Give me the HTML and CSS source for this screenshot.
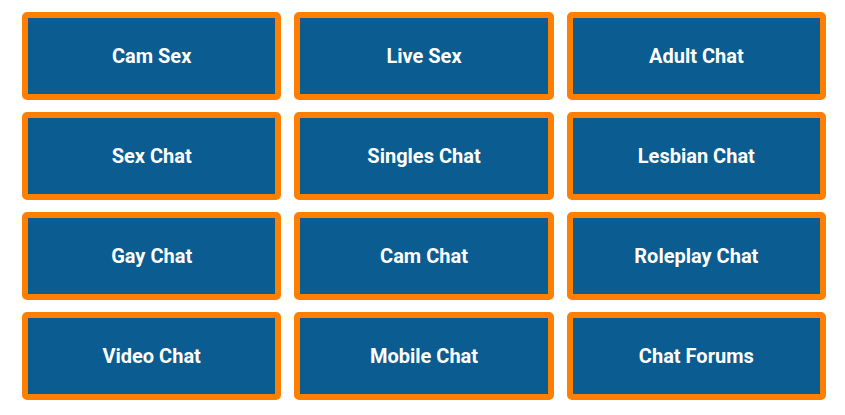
FILE: index.html
```html
<!DOCTYPE html>
<html lang="en">
<head>
    <meta charset="UTF-8">
    <meta name="viewport" content="width=device-width, initial-scale=1.0">
    <title>Chat Rooms</title>
    <link rel="stylesheet" href="styles.css">
</head>
<body>
    <div class="grid">
        <a class="tile" href="#">Cam Sex</a>
        <a class="tile" href="#">Live Sex</a>
        <a class="tile" href="#">Adult Chat</a>
        <a class="tile" href="#">Sex Chat</a>
        <a class="tile" href="#">Singles Chat</a>
        <a class="tile" href="#">Lesbian Chat</a>
        <a class="tile" href="#">Gay Chat</a>
        <a class="tile" href="#">Cam Chat</a>
        <a class="tile" href="#">Roleplay Chat</a>
        <a class="tile" href="#">Video Chat</a>
        <a class="tile" href="#">Mobile Chat</a>
        <a class="tile" href="#">Chat Forums</a>
    </div>
</body>
</html>
```

FILE: styles.css
```css
body {
    margin: 0;
    background-color: #fff;
    font-family: Roboto, "Liberation Sans", Arial, sans-serif;
}

.grid {
    display: grid;
    grid-template-columns: repeat(3, 1fr);
    grid-auto-rows: 88px;
    column-gap: 13px;
    row-gap: 12px;
    width: 804px;
    padding: 12px 0 0 22px;
}

.tile {
    display: flex;
    align-items: center;
    justify-content: center;
    background-color: #0a5c91;
    border: 6px solid #ff8000;
    border-radius: 5px;
    color: #fff;
    font-size: 20px;
    font-weight: bold;
    text-decoration: none;
}
```
